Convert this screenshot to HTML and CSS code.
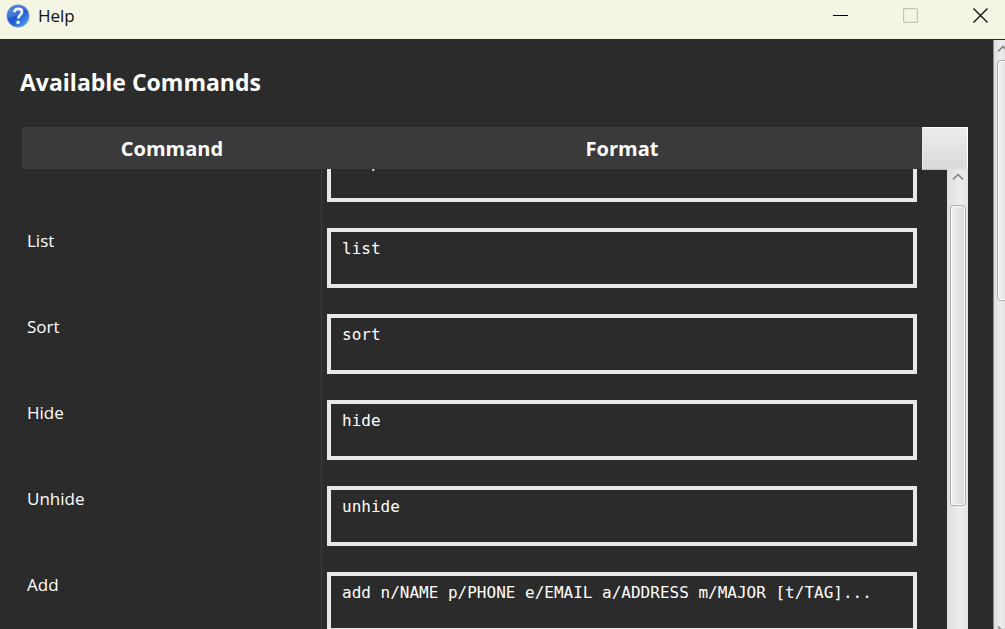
FILE: index.html
```html
<!DOCTYPE html>
<html lang="en">
<head>
<meta charset="utf-8">
<meta name="viewport" content="width=device-width, initial-scale=1">
<title>Help</title>
<link rel="stylesheet" href="styles.css">
</head>
<body class="window">
<header class="titlebar">
  <svg class="app-icon" viewBox="0 0 24 24" aria-hidden="true">
    <defs>
      <linearGradient id="ball" x1="0" y1="0" x2="1" y2="1">
        <stop offset="0" stop-color="#3c78dc"/>
        <stop offset=".5" stop-color="#1d56cf"/>
        <stop offset="1" stop-color="#58b4f8"/>
      </linearGradient>
    </defs>
    <circle cx="12" cy="12" r="11.2" fill="url(#ball)" stroke="#8ea6c6" stroke-width=".8"/>
    <path d="M1.5 13C8 14 15 10 20 4.5A11 11 0 0 0 1.5 13Z" fill="#fff" opacity=".14"/>
    <path d="M8.2 8.2C8.8 5.7 10.4 4.9 12.2 4.9c2.3 0 3.8 1.3 3.8 3.1 0 2.9-3.8 3.1-3.8 6.5" fill="none" stroke="#f3f6ff" stroke-width="2.7"/>
    <circle cx="12.1" cy="18.4" r="1.8" fill="#f3f6ff"/>
  </svg>
  <h1 class="title">Help</h1>
  <div class="controls">
    <button class="control" type="button" aria-label="Minimize"><svg class="control-icon" viewBox="0 0 16 16"><path d="M0 7.5H15" stroke="#000"/></svg></button>
    <button class="control" type="button" aria-label="Maximize" disabled><svg class="control-icon" viewBox="0 0 16 16"><rect x=".6" y=".6" width="13.8" height="13.8" rx="1" fill="none" stroke="#c3c4b3" stroke-width="1.2"/></svg></button>
    <button class="control" type="button" aria-label="Close"><svg class="control-icon" viewBox="0 0 16 16"><path d="M.5.5 14.5 14.5M14.5.5.5 14.5" stroke="#111" stroke-width="1.4"/></svg></button>
  </div>
</header>
<div class="view">
  <main class="content">
    <h2 class="heading">Available Commands</h2>
    <div class="table-frame">
      <table class="commands">
        <thead class="head">
          <tr class="head-row"><th class="head-cell" scope="col">Command</th><th class="head-cell" scope="col">Format</th><td class="corner"></td></tr>
        </thead>
        <tbody class="rows">
          <tr class="row"><td class="name">Help</td><td class="format"><textarea class="code" aria-label="Help format" readonly>help</textarea></td></tr>
          <tr class="row"><td class="name">List</td><td class="format"><textarea class="code" aria-label="List format" readonly>list</textarea></td></tr>
          <tr class="row"><td class="name">Sort</td><td class="format"><textarea class="code" aria-label="Sort format" readonly>sort</textarea></td></tr>
          <tr class="row"><td class="name">Hide</td><td class="format"><textarea class="code" aria-label="Hide format" readonly>hide</textarea></td></tr>
          <tr class="row"><td class="name">Unhide</td><td class="format"><textarea class="code" aria-label="Unhide format" readonly>unhide</textarea></td></tr>
          <tr class="row"><td class="name">Add</td><td class="format"><textarea class="code" aria-label="Add format" readonly>add n/NAME p/PHONE e/EMAIL a/ADDRESS m/MAJOR [t/TAG]...</textarea></td></tr>
        </tbody>
      </table>
      <div class="scrollbar table-scroll" aria-hidden="true">
        <svg class="arrow" viewBox="0 0 12 8"><path d="M1 6.5 6 1.5l5 5" fill="none" stroke="#858585" stroke-width="1.7"/></svg>
        <div class="thumb table-thumb"></div>
      </div>
    </div>
  </main>
  <div class="scrollbar page-scroll" aria-hidden="true">
    <svg class="arrow" viewBox="0 0 12 8"><path d="M1 6.5 6 1.5l5 5" fill="none" stroke="#858585" stroke-width="1.7"/></svg>
    <div class="thumb page-thumb"></div>
    <svg class="arrow arrow-end" viewBox="0 0 12 8"><path d="m1 1.5 5 5 5-5" fill="none" stroke="#858585" stroke-width="1.7"/></svg>
  </div>
</div>
</body>
</html>
```
FILE: styles.css
```css
* {
  box-sizing: border-box;
}

.window {
  display: flex;
  flex-direction: column;
  height: 100vh;
  margin: 0;
  overflow: hidden;
  background: #2b2b2b;
  color: #fff;
  font-family: "Open Sans", "Noto Sans", sans-serif;
}

.titlebar {
  display: flex;
  flex: none;
  align-items: center;
  height: 39px;
  padding: 0 0 7px 6px;
  background: #f4f5e2;
  color: #111;
}

.app-icon {
  width: 24px;
  height: 24px;
}

.title {
  margin: 0 0 0 8px;
  font-size: 17px;
  font-weight: 400;
  line-height: 24px;
}

.controls {
  display: flex;
  gap: 21px;
  margin-left: auto;
}

.control {
  display: flex;
  align-items: center;
  justify-content: center;
  width: 49px;
  height: 32px;
  padding: 0;
  border: 0;
  background: none;
}

.control-icon {
  width: 16px;
  height: 16px;
}

.view {
  display: flex;
  flex: 1;
  min-height: 0;
}

.content {
  display: flex;
  flex: 1;
  flex-direction: column;
  min-width: 0;
  padding: 27px 25px 0 20px;
}

.heading {
  margin: 0 0 29px;
  font-size: 23px;
  font-weight: 700;
  line-height: 32px;
}

.table-frame {
  position: relative;
  flex: 1;
  min-height: 0;
  margin-left: 2px;
}

.commands {
  display: flex;
  flex-direction: column;
  height: 100%;
}

.head {
  display: block;
}

.head-row {
  display: grid;
  grid-template-columns: 300px 1fr 46px;
  height: 42px;
  background: #3a3a3a;
}

.head-cell {
  padding: 0;
  font-size: 20px;
  font-weight: 700;
  line-height: 43px;
  text-align: center;
}

.corner {
  padding: 0;
  border: 1px solid;
  border-color: #fff #fff #c0c0c0 #ececec;
  background: linear-gradient(#ececec, #d9d9d9);
}

.rows {
  display: block;
  flex: 1;
  min-height: 0;
  overflow: hidden;
  padding-right: 21px;
}

.row {
  display: grid;
  grid-template-columns: 300px 1fr;
  height: 86px;
}

/* The list is scrolled part of the way past its first row. */
.row:first-child {
  margin-top: -40px;
}

.name {
  padding: 14px 5px;
  border-right: 1px solid #3b3b3b;
  font-size: 17px;
  line-height: 24px;
}

.format {
  padding: 13px 30px 13px 5px;
}

.code {
  display: block;
  width: 100%;
  height: 60px;
  padding: 7px 11px;
  overflow: hidden;
  border: 4px solid #e8e8e8;
  outline: 0;
  background: #2b2b2b;
  color: #fff;
  font-family: "DejaVu Sans Mono", monospace;
  font-size: 16px;
  line-height: 20px;
  resize: none;
}

.scrollbar {
  display: flex;
  flex-direction: column;
  align-items: center;
  background: linear-gradient(90deg, #dedede, #ececec 60%, #e4e4e4);
}

.arrow {
  flex: none;
  width: 12px;
  height: 8px;
}

.thumb {
  border: 1px solid #ababab;
  border-radius: 4px;
  background: linear-gradient(90deg, #f0f0f0, #d9d9d9);
  box-shadow: inset 0 0 0 1px #fff;
}

.table-scroll {
  position: absolute;
  top: 42px;
  right: 0;
  bottom: 0;
  width: 21px;
  padding-top: 4px;
}

.table-thumb {
  width: 16px;
  height: 301px;
  margin-top: 24px;
}

.page-scroll {
  flex: none;
  align-items: flex-start;
  width: 12px;
  margin-top: 1px;
  padding: 5px 0 0 3px;
  overflow: hidden;
  border-left: 1px solid #8a8a8a;
}

.page-thumb {
  flex: none;
  width: 16px;
  height: 241px;
  margin-top: 7px;
}

.arrow-end {
  margin: auto 0 -4px;
}
```
